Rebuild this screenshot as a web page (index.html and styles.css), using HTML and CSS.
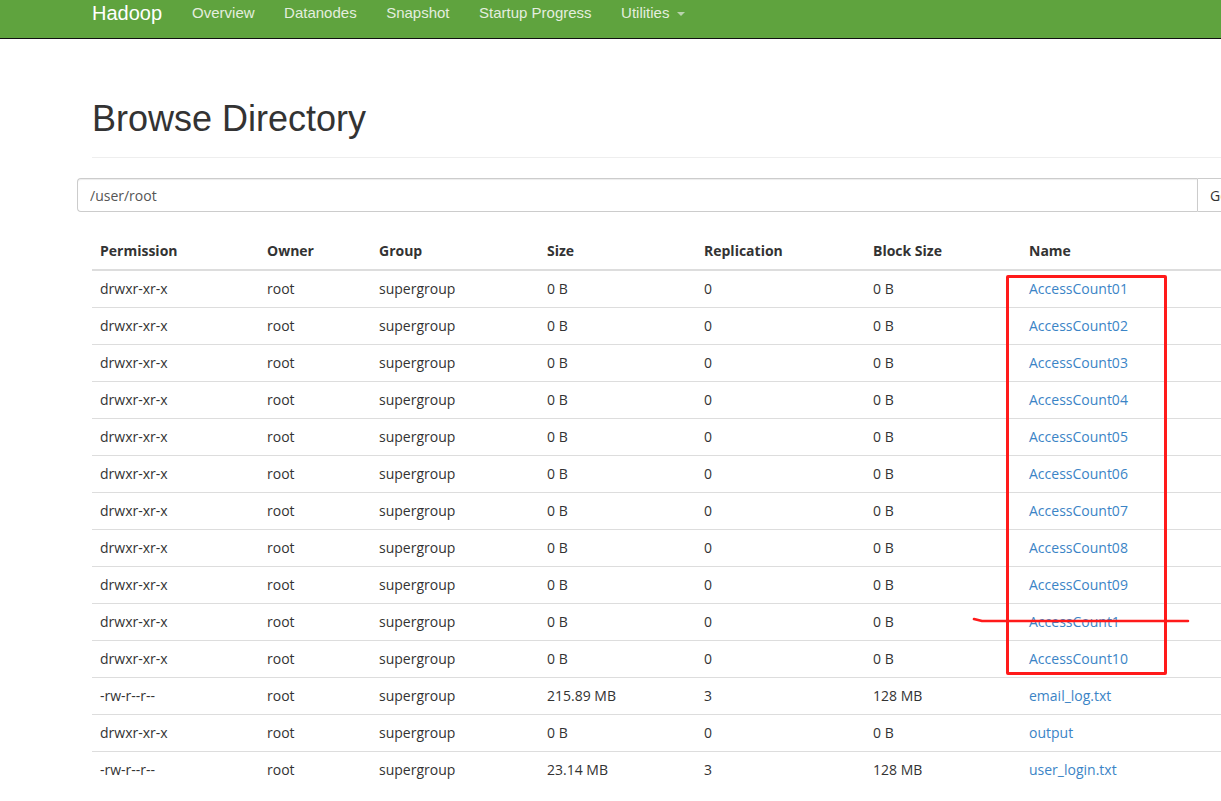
FILE: index.html
```html
<!DOCTYPE html>
<html>
<head>
<meta charset="utf-8">
<title>Browsing HDFS</title>
<link rel="stylesheet" href="styles.css">
</head>
<body>
<nav class="navbar">
  <a class="brand" href="#">Hadoop</a>
  <ul class="nav">
    <li><a href="#">Overview</a></li>
    <li><a href="#">Datanodes</a></li>
    <li><a href="#">Snapshot</a></li>
    <li><a href="#">Startup Progress</a></li>
    <li><a href="#">Utilities <span class="caret"></span></a></li>
  </ul>
</nav>
<main class="page">
  <h1 class="title">Browse Directory</h1>
  <hr class="rule">
  <div class="input-group">
    <input class="path" type="text" value="/user/root">
    <button class="go">Go!</button>
  </div>
  <table class="listing">
    <colgroup>
      <col class="c1"><col class="c2"><col class="c3"><col class="c4"><col class="c5"><col class="c6"><col class="c7">
    </colgroup>
    <thead>
      <tr><th>Permission</th><th>Owner</th><th>Group</th><th>Size</th><th>Replication</th><th>Block Size</th><th>Name</th></tr>
    </thead>
    <tbody>
      <tr><td>drwxr-xr-x</td><td>root</td><td>supergroup</td><td>0 B</td><td>0</td><td>0 B</td><td><a href="#">AccessCount01</a></td></tr>
      <tr><td>drwxr-xr-x</td><td>root</td><td>supergroup</td><td>0 B</td><td>0</td><td>0 B</td><td><a href="#">AccessCount02</a></td></tr>
      <tr><td>drwxr-xr-x</td><td>root</td><td>supergroup</td><td>0 B</td><td>0</td><td>0 B</td><td><a href="#">AccessCount03</a></td></tr>
      <tr><td>drwxr-xr-x</td><td>root</td><td>supergroup</td><td>0 B</td><td>0</td><td>0 B</td><td><a href="#">AccessCount04</a></td></tr>
      <tr><td>drwxr-xr-x</td><td>root</td><td>supergroup</td><td>0 B</td><td>0</td><td>0 B</td><td><a href="#">AccessCount05</a></td></tr>
      <tr><td>drwxr-xr-x</td><td>root</td><td>supergroup</td><td>0 B</td><td>0</td><td>0 B</td><td><a href="#">AccessCount06</a></td></tr>
      <tr><td>drwxr-xr-x</td><td>root</td><td>supergroup</td><td>0 B</td><td>0</td><td>0 B</td><td><a href="#">AccessCount07</a></td></tr>
      <tr><td>drwxr-xr-x</td><td>root</td><td>supergroup</td><td>0 B</td><td>0</td><td>0 B</td><td><a href="#">AccessCount08</a></td></tr>
      <tr><td>drwxr-xr-x</td><td>root</td><td>supergroup</td><td>0 B</td><td>0</td><td>0 B</td><td><a href="#">AccessCount09</a></td></tr>
      <tr><td>drwxr-xr-x</td><td>root</td><td>supergroup</td><td>0 B</td><td>0</td><td>0 B</td><td><a href="#">AccessCount1</a></td></tr>
      <tr><td>drwxr-xr-x</td><td>root</td><td>supergroup</td><td>0 B</td><td>0</td><td>0 B</td><td><a href="#">AccessCount10</a></td></tr>
      <tr><td>-rw-r--r--</td><td>root</td><td>supergroup</td><td>215.89 MB</td><td>3</td><td>128 MB</td><td><a href="#">email_log.txt</a></td></tr>
      <tr><td>drwxr-xr-x</td><td>root</td><td>supergroup</td><td>0 B</td><td>0</td><td>0 B</td><td><a href="#">output</a></td></tr>
      <tr><td>-rw-r--r--</td><td>root</td><td>supergroup</td><td>23.14 MB</td><td>3</td><td>128 MB</td><td><a href="#">user_login.txt</a></td></tr>
    </tbody>
  </table>
</main>
<div class="mark-box"></div>
<svg class="mark-strike" width="230" height="12" viewBox="0 0 230 12">
  <path d="M2 4 L10 6 L216 6" fill="none" stroke="#ff1a1a" stroke-width="2.6" stroke-linecap="round" stroke-linejoin="round"/>
</svg>
</body>
</html>
```

FILE: styles.css
```css
html, body {
  margin: 0;
  padding: 0;
  background: #fff;
  overflow: hidden;
}
body {
  font-family: "Open Sans", "Noto Sans", sans-serif;
  font-size: 14px;
  color: #333;
  position: relative;
  width: 1221px;
  height: 801px;
}
.navbar {
  height: 38px;
  background: #5fa33e;
  border-bottom: 1px solid #111;
  display: flex;
  align-items: flex-start;
  padding-left: 92px;
  font-family: "Liberation Sans", Arial, sans-serif;
}
.brand {
  color: #fff;
  text-decoration: none;
  font-size: 20px;
  line-height: 26px;
  margin-top: 0;
}
.nav {
  list-style: none;
  margin: 0 0 0 30px;
  padding: 0;
  display: flex;
  gap: 29.5px;
}
.nav a {
  color: #e4eedf;
  text-decoration: none;
  font-size: 15px;
  line-height: 26px;
}
.caret {
  display: inline-block;
  width: 0;
  height: 0;
  margin-left: 3px;
  vertical-align: middle;
  border-top: 4px solid #b9d3ad;
  border-left: 4px solid transparent;
  border-right: 4px solid transparent;
}
.page {
  padding-left: 92px;
}
.title {
  font-family: "Liberation Sans", Arial, sans-serif;
  font-weight: normal;
  font-size: 36px;
  line-height: 40px;
  margin: 60px 0 0 0;
  color: #333;
}
.rule {
  margin: 18px 0 0 0;
  border: 0;
  border-top: 1px solid #eee;
}
.input-group {
  display: flex;
  margin: 20px 0 0 -15px;
  width: 1200px;
}
.path {
  width: 1120px;
  box-sizing: border-box;
  height: 34px;
  border: 1px solid #ccc;
  border-right: 0;
  border-radius: 4px 0 0 4px;
  padding: 6px 12px;
  font-family: "Open Sans", "Noto Sans", sans-serif;
  font-size: 14px;
  color: #555;
  box-shadow: inset 0 1px 1px rgba(0,0,0,.075);
  outline: none;
}
.go {
  height: 34px;
  border: 1px solid #ccc;
  background: #fff;
  padding: 6px 12px;
  font-family: "Open Sans", "Noto Sans", sans-serif;
  font-size: 14px;
  color: #333;
  border-radius: 0 4px 4px 0;
}
.listing {
  margin-top: 21px;
  border-collapse: collapse;
  table-layout: fixed;
  width: 1220px;
}
.c1 { width: 167px; }
.c2 { width: 112px; }
.c3 { width: 168px; }
.c4 { width: 157px; }
.c5 { width: 169px; }
.c6 { width: 156px; }
.c7 { width: auto; }
.listing th {
  text-align: left;
  font-weight: bold;
  padding: 8px;
  line-height: 20px;
  border-bottom: 2px solid #ddd;
  color: #333;
}
.listing td {
  padding: 8px;
  line-height: 20px;
  border-top: 1px solid #ddd;
  white-space: nowrap;
}
.listing a {
  color: #3b84c6;
  text-decoration: none;
}
.mark-box {
  position: absolute;
  left: 1006px;
  top: 275px;
  width: 155px;
  height: 394px;
  border: 3px solid #ff1a1a;
  border-radius: 2px;
}
.mark-strike {
  position: absolute;
  left: 972px;
  top: 615px;
}
```
